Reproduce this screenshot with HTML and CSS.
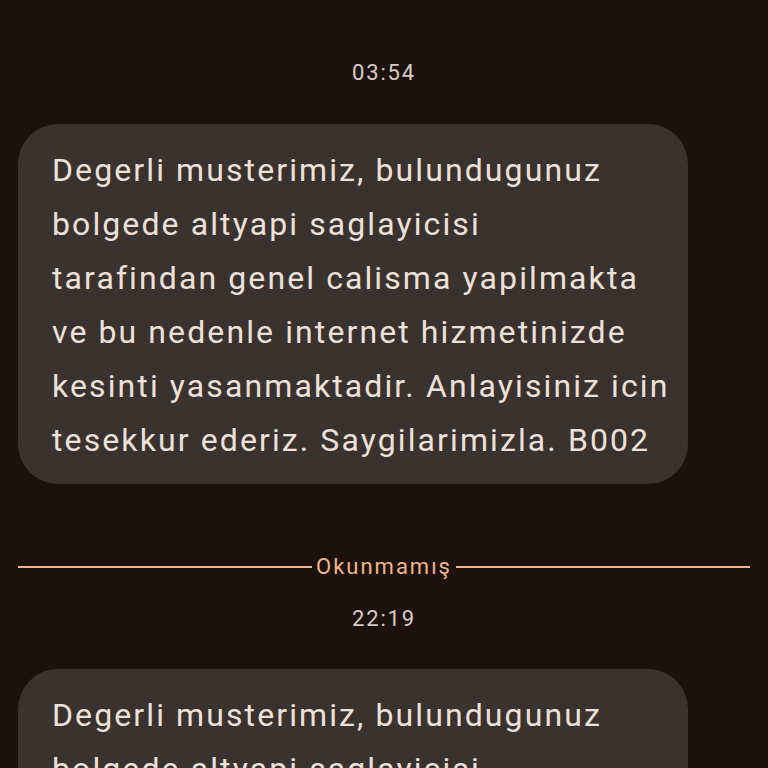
FILE: index.html
```html
<!DOCTYPE html>
<html lang="tr">
<head>
<meta charset="utf-8">
<link rel="stylesheet" href="styles.css">
</head>
<body>
<main class="thread">
  <div class="time first">03:54</div>
  <div class="bubble">Degerli musterimiz, bulundugunuz<br>bolgede altyapi saglayicisi<br>tarafindan genel calisma yapilmakta<br>ve bu nedenle internet hizmetinizde<br>kesinti yasanmaktadir. Anlayisiniz icin<br>tesekkur ederiz. Saygilarimizla. B002</div>
  <div class="divider"><span class="line"></span><span class="label">Okunmamış</span><span class="line"></span></div>
  <div class="time">22:19</div>
  <div class="bubble">Degerli musterimiz, bulundugunuz<br>bolgede altyapi saglayicisi<br>tarafindan genel calisma yapilmakta<br>ve bu nedenle internet hizmetinizde<br>kesinti yasanmaktadir. Anlayisiniz icin<br>tesekkur ederiz. Saygilarimizla. B002</div>
</main>
</body>
</html>
```
FILE: styles.css
```css
html, body {
  margin: 0;
  padding: 0;
  background: #1c120b;
  height: 100%;
  overflow: hidden;
}
.thread {
  font-family: Roboto, "Noto Sans", sans-serif;
  display: flex;
  flex-direction: column;
  padding: 0 18px;
}
.time {
  color: #d9ccc3;
  font-size: 22px;
  letter-spacing: 1.8px;
  line-height: 24px;
  text-align: center;
  margin: 0 0 38px;
}
.time.first {
  margin-top: 61px;
  margin-bottom: 39px;
}
.bubble {
  width: 670px;
  box-sizing: border-box;
  background: #3a322e;
  color: #eee1d9;
  border-radius: 40px;
  padding: 19px 20px 17px 34px;
  font-size: 32px;
  letter-spacing: 2.1px;
  line-height: 54px;
  white-space: nowrap;
}
.divider {
  display: flex;
  align-items: center;
  gap: 4px;
  margin-top: 71px;
  margin-bottom: 28px;
}
.line {
  flex: 1;
  height: 2px;
  background: #f1b68b;
}
.label {
  color: #f1b68b;
  font-size: 22px;
  letter-spacing: 2px;
  line-height: 24px;
}
```
